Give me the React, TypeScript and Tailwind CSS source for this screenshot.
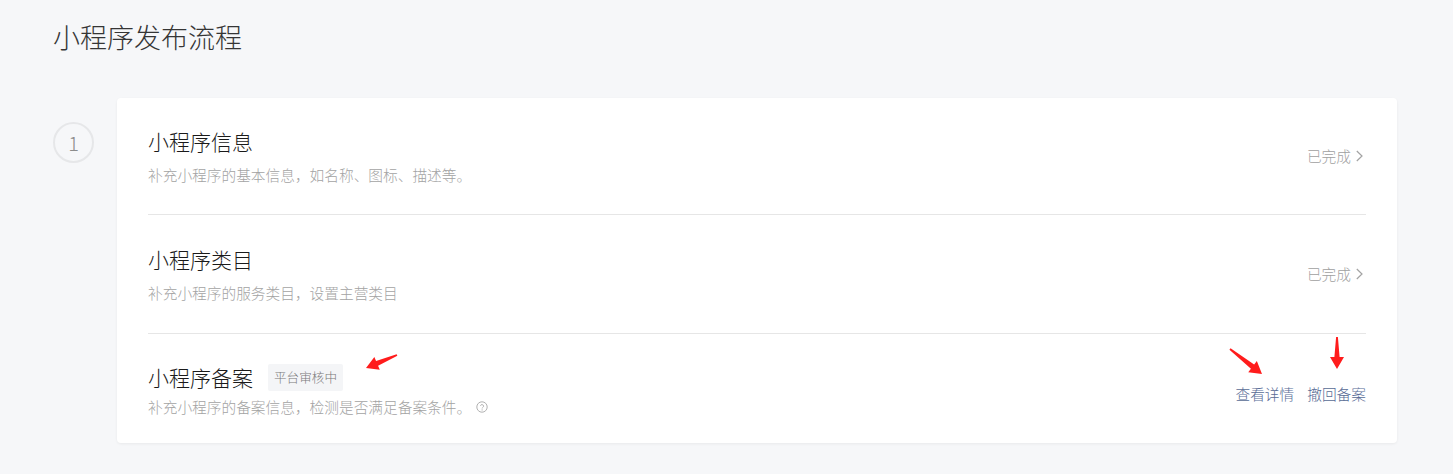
import React from "react";

type Pt = [number, number];

function arrowPoints(tail: Pt, tip: Pt, headLen = 12, headW = 7, neckW = 2.6, tailW = 0.9): string {
  const dx = tip[0] - tail[0];
  const dy = tip[1] - tail[1];
  const len = Math.hypot(dx, dy);
  const ux = dx / len;
  const uy = dy / len;
  const nx = -uy;
  const ny = ux;
  const neck: Pt = [tip[0] - ux * headLen, tip[1] - uy * headLen];
  const p = (b: Pt, w: number): string => `${(b[0] + nx * w).toFixed(2)},${(b[1] + ny * w).toFixed(2)}`;
  return [
    p(tail, tailW),
    p(neck, neckW),
    p(neck, headW),
    `${tip[0]},${tip[1]}`,
    p(neck, -headW),
    p(neck, -neckW),
    p(tail, -tailW),
  ].join(" ");
}

function Chevron() {
  return (
    <svg width="7" height="12" viewBox="0 0 7 12" className="ml-[5px] mr-[3px]">
      <polyline points="0.8,1 6,6 0.8,11" fill="none" stroke="#a3a3a3" strokeWidth="1.2" />
    </svg>
  );
}

function HelpIcon() {
  return (
    <svg width="12" height="12" viewBox="0 0 12 12" className="ml-[5px]">
      <circle cx="6" cy="6" r="5.2" fill="none" stroke="#a8a8a8" strokeWidth="0.9" />
      <path d="M4.4 4.7a1.65 1.65 0 0 1 3.2 0.5c0 1-1.5 1.3-1.5 2.2" fill="none" stroke="#a8a8a8" strokeWidth="0.9" />
      <circle cx="6.1" cy="8.9" r="0.55" fill="#a8a8a8" />
    </svg>
  );
}

export default function App() {
  return (
    <div className="relative min-h-[474px] bg-[#f6f7f9] font-['Noto_Sans_CJK_SC','Noto_Sans',sans-serif] font-light">
      <div className="pl-[53px] pr-[56px] pt-[19px]">
        <h1 className="text-[27px] leading-[36px] text-[#353535] font-light">小程序发布流程</h1>
        <div className="mt-[43px] flex">
          <div className="w-[64px] shrink-0 pt-[24px]">
            <div className="flex h-[41px] w-[41px] items-center justify-center rounded-full border-2 border-[#e6e7e9] text-[20px] leading-none text-[#8c8c8c]">
              1
            </div>
          </div>
          <div className="flex-1 rounded-[4px] bg-white px-[31px] shadow-[0_1px_3px_rgba(0,0,0,0.06)]">
            <div className="flex items-center justify-between border-b border-[#e6e6e6] py-[29px]">
              <div>
                <div className="text-[21px] leading-[28px] text-[#1a1a1a]">小程序信息</div>
                <div className="mt-[10px] text-[14.7px] leading-[20px] text-[#a3a3a3]">补充小程序的基本信息，如名称、图标、描述等。</div>
              </div>
              <div className="flex items-center text-[14.7px] leading-[20px] text-[#9f9f9f]">
                已完成
                <Chevron />
              </div>
            </div>
            <div className="flex items-center justify-between border-b border-[#e6e6e6] py-[30px]">
              <div>
                <div className="text-[21px] leading-[28px] text-[#1a1a1a]">小程序类目</div>
                <div className="mt-[10px] text-[14.7px] leading-[20px] text-[#a3a3a3]">补充小程序的服务类目，设置主营类目</div>
              </div>
              <div className="flex items-center text-[14.7px] leading-[20px] text-[#9f9f9f]">
                已完成
                <Chevron />
              </div>
            </div>
            <div className="flex items-center justify-between pt-[29px] pb-[26px]">
              <div>
                <div className="flex h-[28px] items-center">
                  <span className="text-[21px] leading-[28px] text-[#1a1a1a]">小程序备案</span>
                  <span className="ml-[15px] flex h-[27px] items-center rounded-[2px] bg-[#f4f5f7] px-[6px] text-[12.6px] text-[#7a7a7a]">平台审核中</span>
                </div>
                <div className="mt-[6px] flex items-center text-[14.7px] leading-[20px] text-[#a3a3a3]">
                  补充小程序的备案信息，检测是否满足备案条件。
                  <HelpIcon />
                </div>
              </div>
              <div className="flex items-center gap-[13px] pt-[8px] text-[14.7px] leading-[20px] text-[#576b95]">
                <span>查看详情</span>
                <span>撤回备案</span>
              </div>
            </div>
          </div>
        </div>
      </div>
      <svg className="pointer-events-none absolute left-0 top-0" width="1453" height="474">
        <polygon points={arrowPoints([397, 355], [366, 368])} fill="#ff1c1c" />
        <polygon points={arrowPoints([1230, 349], [1262, 374])} fill="#ff1c1c" />
        <polygon points={arrowPoints([1337, 337], [1337, 369])} fill="#ff1c1c" />
      </svg>
    </div>
  );
}
